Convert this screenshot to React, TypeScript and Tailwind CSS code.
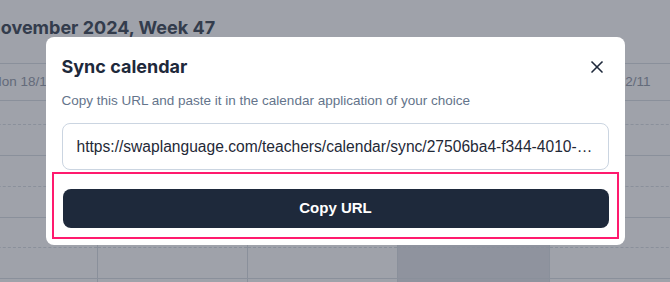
import { X } from 'lucide-react';

const days = [
  { label: 'Mon 18/11', today: false },
  { label: 'Tue 19/11', today: false },
  { label: 'Wed 20/11', today: false },
  { label: 'Thu 21/11', today: true },
  { label: 'Fri 22/11', today: false },
];

// first slot is partly scrolled away, the rest are half-hour slots
const slots = [
  { h: 'h-[24px]', dashed: true },
  { h: 'h-[31px]', dashed: false },
  { h: 'h-[31px]', dashed: true },
  { h: 'h-[31px]', dashed: false },
  { h: 'h-[30px]', dashed: true },
  { h: 'h-[31px]', dashed: false },
  { h: 'h-[31px]', dashed: true },
];

const syncUrl =
  'https://swaplanguage.com/teachers/calendar/sync/27506ba4-f344-4010-9c2e-5b1f0d7a8e43';

export default function App() {
  return (
    <div className="relative h-[282px] w-[670px] overflow-hidden bg-white font-['Liberation_Sans',Arial,sans-serif]">
      {/* calendar page behind the dialog */}
      <div className="flex flex-col">
        <h1 className="-ml-[13px] pt-[14px] font-['Inter',sans-serif] text-[18px] leading-7 font-bold whitespace-nowrap text-[#4b5563]">
          November 2024, Week 47
        </h1>

        <div className="-ml-[53px] mt-[21px] flex w-[752px]">
          {days.map((day, i) => (
            <div
              key={day.label}
              className={`flex flex-col ${i === 3 ? 'w-[152px]' : 'w-[150px]'} ${
                i > 0 ? 'border-l border-[#dde1e6]' : ''
              } ${day.today ? 'bg-[#e5e7eb]' : ''}`}
            >
              <div className="flex h-[38px] items-center justify-center border-y border-[#dde1e6] text-[13.5px] text-[#9ca3af]">
                {day.label}
              </div>
              {slots.map((slot, j) => (
                <div
                  key={j}
                  className={`${slot.h} border-b border-[#dde1e6] ${
                    slot.dashed ? 'border-dashed' : 'border-solid'
                  }`}
                />
              ))}
            </div>
          ))}
        </div>
      </div>

      {/* dialog */}
      <div className="absolute inset-0 flex items-center justify-center bg-[#0f172a]/40">
        <div className="w-[579px] rounded-lg bg-white px-4 pt-4 pb-1.5">
          <div className="flex h-7 items-center justify-between">
            <h2 className="font-['Inter',sans-serif] text-[18px] leading-7 font-bold text-[#1e293b]">
              Sync calendar
            </h2>
            <button className="mr-[2px] text-[#1e293b]">
              <X size={20} strokeWidth={2} />
            </button>
          </div>

          <p className="mt-2.5 text-[13.5px] leading-5 text-[#64748b]">
            Copy this URL and paste it in the calendar application of your choice
          </p>

          <div className="mt-3 flex h-[47px] items-center rounded-lg border border-[#cbd5e1] pr-[12px] pl-[14px]">
            <span className="truncate text-[15.6px] text-[#1f2937]">{syncUrl}</span>
          </div>

          <div className="-mx-[10px] mt-0.5 border-2 border-[#ff1a6e] pt-[15px] pr-[8px] pb-[9px] pl-[9px]">
            <button className="flex h-[39px] w-full items-center justify-center rounded-lg bg-[#1e293b] text-[15px] font-bold text-white">
              Copy URL
            </button>
          </div>
        </div>
      </div>
    </div>
  );
}
